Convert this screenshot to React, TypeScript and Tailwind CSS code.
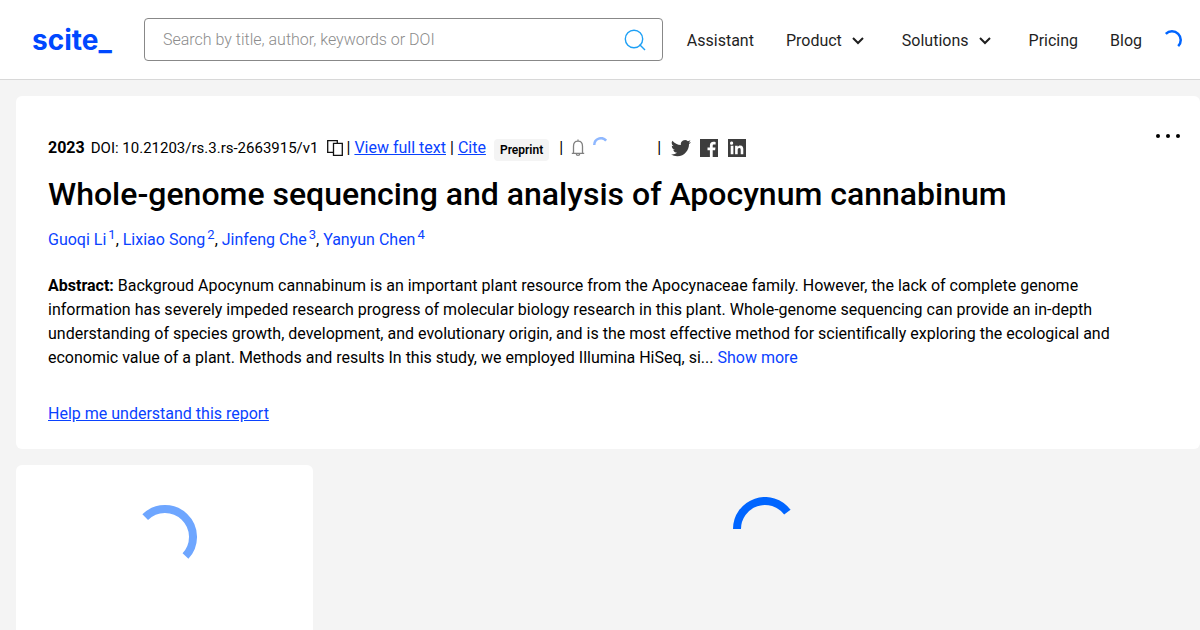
import type { ReactNode } from "react";

const navItems = [
  { label: "Assistant", hasMenu: false },
  { label: "Product", hasMenu: true },
  { label: "Solutions", hasMenu: true },
  { label: "Pricing", hasMenu: false },
  { label: "Blog", hasMenu: false },
];

const authors = ["Guoqi Li", "Lixiao Song", "Jinfeng Che", "Yanyun Chen"];

function Spinner({ className, from, to, stroke }: { className: string; from: number; to: number; stroke: number }) {
  const r = 32 - stroke / 2;
  const point = (deg: number) => {
    const a = (deg * Math.PI) / 180;
    return `${32 + r * Math.cos(a)} ${32 + r * Math.sin(a)}`;
  };
  return (
    <svg viewBox="0 0 64 64" fill="none" stroke="currentColor" strokeWidth={stroke} className={className} role="status" aria-label="Loading">
      <path d={`M${point(from)}A${r} ${r} 0 0 1 ${point(to)}`} />
    </svg>
  );
}

function SearchIcon() {
  return (
    <svg viewBox="0 0 22 22" fill="none" stroke="#1ea0f5" strokeWidth="1.4" className="size-[22px]">
      <circle cx="10" cy="10" r="8.7" />
      <path d="M15.5 15.5 21 21" />
    </svg>
  );
}

function Chevron() {
  return (
    <svg viewBox="0 0 12 8" fill="none" stroke="currentColor" strokeWidth="2" className="h-2 w-3">
      <path d="M1 1 6 6 11 1" />
    </svg>
  );
}

function CopyIcon() {
  return (
    <svg viewBox="0 0 16 16" fill="none" stroke="#111" strokeWidth="1.3" className="size-4">
      <path d="M6 12.4H.7V.7H10.3V3" />
      <path d="M6.5 3.3H15.3V15.3H6.5Z" />
    </svg>
  );
}

function BellIcon() {
  return (
    <svg viewBox="0 0 14 18" fill="none" stroke="#808080" strokeWidth="1.3" className="h-[18px] w-3.5">
      <path d="M.8 14.3H13.2M2.5 14V7.2C2.5 4.2 4.4 2.2 7 2.2S11.5 4.2 11.5 7.2V14M7 .5V2.2M5.3 14.8C5.3 17 8.7 17 8.7 14.8" />
    </svg>
  );
}

function SocialLink({ label, children }: { label: string; children: ReactNode }) {
  return (
    <a href="#" aria-label={label} className="text-[#3d3d3d]">
      <svg viewBox="0 0 20 20" fill="currentColor" className="size-5">{children}</svg>
    </a>
  );
}

function Header() {
  return (
    <header className="flex h-20 items-center border-b border-[#d8d8d8] bg-white pr-[18px] pl-8">
      <a href="#" className="flex w-28 shrink-0 items-end font-['Inter',sans-serif] text-[28px] leading-8 font-bold text-[#0048ff]">
        scite_
      </a>
      <form className="flex h-[43px] min-w-0 flex-1 items-center rounded border border-[#888] px-4">
        <input aria-label="Search" placeholder="Search by title, author, keywords or DOI" className="min-w-0 flex-1 px-0.5 text-base font-light outline-none placeholder:text-[#8c8c8c]" />
        <button type="button" aria-label="Search"><SearchIcon /></button>
      </form>
      <nav className="mt-0.5 ml-6 flex shrink-0 items-center gap-8 text-base text-[#1f1f1f]">
        {navItems.map((item) =>
          item.hasMenu ? (
            <button key={item.label} type="button" className="flex items-center gap-2.5 pr-1.5">{item.label}<Chevron /></button>
          ) : (
            <a key={item.label} href="#">{item.label}</a>
          )
        )}
      </nav>
      <Spinner className="ml-5 size-5 shrink-0 text-[#0065ff]" from={-135} to={45} stroke={8} />
    </header>
  );
}

function PaperMeta() {
  return (
    <div className="flex h-6 items-center text-base whitespace-nowrap">
      <b>2023</b>
      <span className="ml-1.5 text-[15px]">DOI: 10.21203/rs.3.rs-2663915/v1</span>
      <button type="button" aria-label="Copy DOI" className="ml-2"><CopyIcon /></button>
      <span className="ml-1">|</span>
      <a href="#" className="ml-1 text-[#0a42ff] underline">View full text</a>
      <span className="ml-1">|</span>
      <a href="#" className="ml-1 text-[#0a42ff] underline">Cite</a>
      <span className="mt-1 ml-2 rounded bg-[#f4f4f4] px-1.5 py-0.5 text-xs leading-[18px] font-semibold">Preprint</span>
      <span className="ml-2.5">|</span>
      <button type="button" aria-label="Notify me" className="ml-2"><BellIcon /></button>
      <Spinner className="mb-1.5 ml-2 size-4 text-[#8fb8ff]" from={180} to={-40} stroke={10} />
      <span className="ml-12">|</span>
      <div className="ml-2.5 flex gap-2">
        <SocialLink label="Twitter">
          <path d="M20 3.9a8 8 0 0 1-2.3.7 4 4 0 0 0 1.7-2.3 8 8 0 0 1-2.5 1 4.1 4.1 0 0 0-7 3.7A11.6 11.6 0 0 1 1.4 2.7a4.1 4.1 0 0 0 1.3 5.5 4 4 0 0 1-1.9-.5 4.1 4.1 0 0 0 3.3 4 4 4 0 0 1-1.9.1 4.1 4.1 0 0 0 3.9 2.9A8.2 8.2 0 0 1 0 16.4 11.6 11.6 0 0 0 6.3 18.2c7.5 0 11.7-6.3 11.7-11.7V6A8 8 0 0 0 20 3.9Z" />
        </SocialLink>
        <SocialLink label="Facebook">
          <path d="M1 1H19V19H13.7V12.3H16.1L16.5 9.5H13.7V7.7C13.7 6.9 14 6.4 15.1 6.4H16.6V3.9C16.3 3.8 15.4 3.7 14.4 3.7 12.3 3.7 10.9 5 10.9 7.3V9.5H8.5V12.3H10.9V19H1Z" />
        </SocialLink>
        <SocialLink label="LinkedIn">
          <path fillRule="evenodd" d="M1 1H19V19H1ZM3.7 7.8V16.3H6.4V7.8ZM5 3.6A1.6 1.6 0 1 0 5 6.7 1.6 1.6 0 0 0 5 3.6ZM8.1 7.8V16.3H10.7V12.1C10.7 11 10.9 9.9 12.3 9.9 13.7 9.9 13.7 11.2 13.7 12.2V16.3H16.3V11.6C16.3 9.3 15.8 7.6 13.2 7.6 11.9 7.6 11.1 8.3 10.7 9V7.8Z" />
        </SocialLink>
      </div>
    </div>
  );
}

export default function App() {
  return (
    <div className="flex min-h-screen flex-col bg-[#f4f4f4] font-['Roboto',sans-serif] text-black">
      <Header />
      <main className="flex flex-1 flex-col gap-4 pt-4 pl-4">
        <article className="relative rounded-md bg-white px-8 pt-10 pb-[23px]">
          <button type="button" aria-label="More options" className="absolute top-[38px] right-5 flex gap-1.5">
            <span className="size-1 rounded-full bg-black" />
            <span className="size-1 rounded-full bg-black" />
            <span className="size-1 rounded-full bg-black" />
          </button>
          <PaperMeta />
          <h1 className="mt-3.5 text-[32px] leading-10 font-medium">Whole-genome sequencing and analysis of Apocynum cannabinum</h1>
          <p className="mt-3.5 h-6 text-base leading-6">
            {authors.map((name, i) => (
              <span key={name}>
                {i > 0 ? ", " : ""}
                <a href="#" className="text-[#0a42ff]">{name}<sup className="ml-0.5 text-[13px]">{i + 1}</sup></a>
              </span>
            ))}
          </p>
          <p className="mt-[22px] max-w-[1080px] text-base leading-6">
            <b>Abstract:</b> Backgroud Apocynum cannabinum is an important plant resource from the Apocynaceae family. However, the lack of complete genome information has severely impeded research progress of molecular biology research in this plant. Whole-genome sequencing can provide an in-depth understanding of species growth, development, and evolutionary origin, and is the most effective method for scientifically exploring the ecological and economic value of a plant. Methods and results In this study, we employed Illumina HiSeq, si...{" "}
            <button type="button" className="text-[#0a42ff]">Show more</button>
          </p>
          <a href="#" className="mt-8 inline-block text-base leading-6 text-[#0a42ff] underline">Help me understand this report</a>
        </article>
        <div className="flex flex-1 gap-4">
          <aside className="flex w-[297px] justify-center rounded-t-md bg-white pt-10">
            <Spinner className="size-16 text-[#6ea6ff]" from={-135} to={43} stroke={8} />
          </aside>
          <section className="flex flex-1 justify-center pt-8">
            <Spinner className="size-16 text-[#0065ff]" from={180} to={-37} stroke={8} />
          </section>
        </div>
      </main>
    </div>
  );
}
